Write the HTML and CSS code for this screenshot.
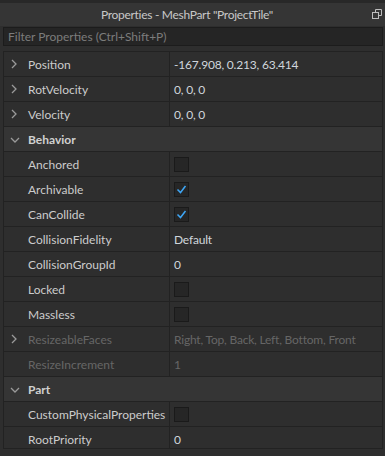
FILE: index.html
```html
<!DOCTYPE html>
<html>
<head>
<meta charset="utf-8">
<link rel="stylesheet" href="styles.css">
</head>
<body>
<div class="panel">
  <div class="topstrip"></div>
  <div class="titlebar">
    <span class="title">Properties - MeshPart "ProjectTile"</span>
    <svg class="restore" width="10" height="10" viewBox="0 0 10 10">
      <path d="M3.5 3.5 V0.5 H9.5 V6.5 H6.5" fill="none" stroke="#bdbdbd" stroke-width="1"/>
      <rect x="0.5" y="3.5" width="6" height="6" fill="none" stroke="#bdbdbd" stroke-width="1"/>
    </svg>
  </div>
  <div class="filter">Filter Properties (Ctrl+Shift+P)</div>
  <div class="list">
    <div class="row">
      <div class="name"><svg class="chev" width="6" height="10" viewBox="0 0 6 10"><path d="M1 1 L5 5 L1 9" fill="none" stroke="#9a9a9a" stroke-width="1.3"/></svg>Position</div>
      <div class="value">-167.908, 0.213, 63.414</div>
    </div>
    <div class="row">
      <div class="name"><svg class="chev" width="6" height="10" viewBox="0 0 6 10"><path d="M1 1 L5 5 L1 9" fill="none" stroke="#9a9a9a" stroke-width="1.3"/></svg>RotVelocity</div>
      <div class="value">0, 0, 0</div>
    </div>
    <div class="row">
      <div class="name"><svg class="chev" width="6" height="10" viewBox="0 0 6 10"><path d="M1 1 L5 5 L1 9" fill="none" stroke="#9a9a9a" stroke-width="1.3"/></svg>Velocity</div>
      <div class="value">0, 0, 0</div>
    </div>
    <div class="section"><svg class="chevdown" width="10" height="6" viewBox="0 0 10 6"><path d="M1 1 L5 5 L9 1" fill="none" stroke="#9a9a9a" stroke-width="1.3"/></svg>Behavior</div>
    <div class="row">
      <div class="name">Anchored</div>
      <div class="value"><span class="check"></span></div>
    </div>
    <div class="row">
      <div class="name">Archivable</div>
      <div class="value"><span class="check"><svg width="13" height="13" viewBox="0 0 13 13"><path d="M2.5 6.5 L5.5 9.5 L10.5 3" fill="none" stroke="#3ea6f5" stroke-width="1.5"/></svg></span></div>
    </div>
    <div class="row">
      <div class="name">CanCollide</div>
      <div class="value"><span class="check"><svg width="13" height="13" viewBox="0 0 13 13"><path d="M2.5 6.5 L5.5 9.5 L10.5 3" fill="none" stroke="#3ea6f5" stroke-width="1.5"/></svg></span></div>
    </div>
    <div class="row">
      <div class="name">CollisionFidelity</div>
      <div class="value">Default</div>
    </div>
    <div class="row">
      <div class="name">CollisionGroupId</div>
      <div class="value">0</div>
    </div>
    <div class="row">
      <div class="name">Locked</div>
      <div class="value"><span class="check"></span></div>
    </div>
    <div class="row">
      <div class="name">Massless</div>
      <div class="value"><span class="check"></span></div>
    </div>
    <div class="row disabled">
      <div class="name"><svg class="chev" width="6" height="10" viewBox="0 0 6 10"><path d="M1 1 L5 5 L1 9" fill="none" stroke="#9a9a9a" stroke-width="1.3"/></svg>ResizeableFaces</div>
      <div class="value">Right, Top, Back, Left, Bottom, Front</div>
    </div>
    <div class="row disabled">
      <div class="name">ResizeIncrement</div>
      <div class="value">1</div>
    </div>
    <div class="section"><svg class="chevdown" width="10" height="6" viewBox="0 0 10 6"><path d="M1 1 L5 5 L9 1" fill="none" stroke="#9a9a9a" stroke-width="1.3"/></svg>Part</div>
    <div class="row">
      <div class="name">CustomPhysicalProperties</div>
      <div class="value"><span class="check"></span></div>
    </div>
    <div class="row">
      <div class="name">RootPriority</div>
      <div class="value">0</div>
    </div>
  </div>
</div>
</body>
</html>
```
FILE: styles.css
```css
html, body {
  margin: 0;
  padding: 0;
  background: #2e2e2e;
}
body {
  width: 385px;
  height: 456px;
  overflow: hidden;
  font-family: Lato, "Open Sans", sans-serif;
  font-size: 12px;
  color: #cccccc;
}
.panel {
  display: flex;
  flex-direction: column;
  height: 456px;
}
.topstrip {
  height: 3px;
  background: #282828;
}
.titlebar {
  height: 23px;
  background: #353535;
  display: flex;
  align-items: center;
  justify-content: center;
  position: relative;
  padding-right: 11px;
  color: #c8c8c8;
  letter-spacing: -0.3px;
}
.restore {
  position: absolute;
  right: 3px;
  top: 6px;
}
.filter {
  margin: 1px 2px 0 3px;
  height: 17px;
  line-height: 18px;
  background: #252525;
  border: 1px solid #1c1c1c;
  padding-left: 4px;
  color: #7c7c7c;
}
.list {
  margin: 5px 2px 0 3px;
  border: 1px solid #222222;
  height: 396px;
  overflow: hidden;
}
.row {
  display: flex;
  height: 24px;
  border-bottom: 1px solid #222222;
}
.name {
  width: 141px;
  flex: none;
  padding-left: 24px;
  border-right: 1px solid #222222;
  display: flex;
  align-items: center;
  position: relative;
  white-space: nowrap;
}
.chev {
  position: absolute;
  left: 7px;
  top: 7px;
}
.value {
  flex: 1;
  padding-left: 4px;
  display: flex;
  align-items: center;
  white-space: nowrap;
  color: #d0d6dc;
  letter-spacing: -0.2px;
}
.disabled .name,
.disabled .value {
  color: #666666;
}
.section {
  height: 24px;
  border-bottom: 1px solid #222222;
  background: #353535;
  display: flex;
  align-items: center;
  padding-left: 24px;
  position: relative;
  font-weight: bold;
  color: #d0d0d0;
}
.chevdown {
  position: absolute;
  left: 6px;
  top: 10px;
}
.check {
  width: 13px;
  height: 13px;
  background: #262626;
  border: 1px solid #1a1a1a;
  display: flex;
}
```
